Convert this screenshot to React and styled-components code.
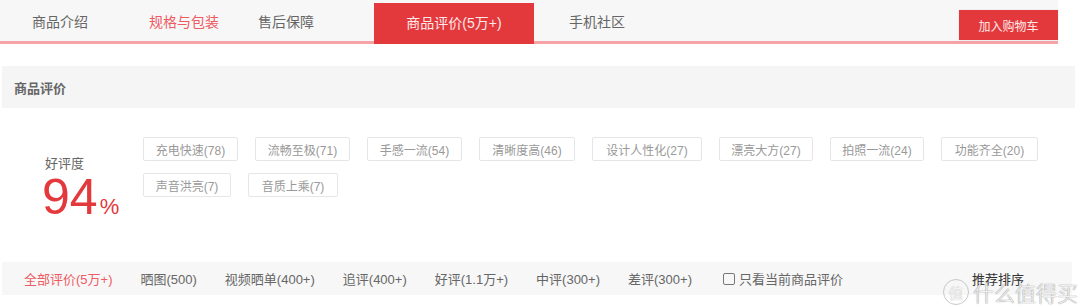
import React from "react";
import styled, { createGlobalStyle } from "styled-components";

const GlobalStyle = createGlobalStyle`
  html, body {
    margin: 0;
    padding: 0;
    background: #ffffff;
    font-family: "Liberation Sans", "Noto Sans CJK SC", sans-serif;
  }
`;

const tabs = [
  { label: "商品介绍", width: 120 },
  { label: "规格与包装", width: 128, tone: "pink" },
  { label: "售后保障", width: 76 },
  { label: "商品评价(5万+)", width: 160, active: true, gap: 50 },
  { label: "手机社区", width: 126 },
];

const tags = [
  ["充电快速(78)", 95],
  ["流畅至极(71)", 95],
  ["手感一流(54)", 95],
  ["清晰度高(46)", 96],
  ["设计人性化(27)", 110],
  ["漂亮大方(27)", 94],
  ["拍照一流(24)", 94],
  ["功能齐全(20)", 97],
  ["声音洪亮(7)", 88],
  ["音质上乘(7)", 90],
];

const filters = [
  { label: "全部评价(5万+)", active: true },
  { label: "晒图(500)" },
  { label: "视频晒单(400+)" },
  { label: "追评(400+)" },
  { label: "好评(1.1万+)" },
  { label: "中评(300+)" },
  { label: "差评(300+)" },
];

function App() {
  return (
    <Page>
      <GlobalStyle />
      <TabBar>
        <TabList>
          {tabs.map((t) => (
            <Tab
              key={t.label}
              $w={t.width}
              $gap={t.gap}
              $active={t.active}
              $tone={t.tone}
            >
              {t.label}
            </Tab>
          ))}
        </TabList>
        <CartButton>加入购物车</CartButton>
      </TabBar>

      <SectionHead>商品评价</SectionHead>

      <Summary>
        <Rate>
          <RateLabel>好评度</RateLabel>
          <RateValue>
            94<Percent>%</Percent>
          </RateValue>
        </Rate>
        <TagList>
          {tags.map(([label, w]) => (
            <Tag key={label} $w={w}>
              {label}
            </Tag>
          ))}
        </TagList>
      </Summary>

      <FilterBar>
        {filters.map((f) => (
          <Filter key={f.label} $active={f.active}>
            {f.label}
          </Filter>
        ))}
        <OnlyCurrent>
          <CheckBox />
          只看当前商品评价
        </OnlyCurrent>
        <Sort>推荐排序</Sort>
        <Watermark>
          <WatermarkBadge>值</WatermarkBadge>
          什么值得买
        </Watermark>
      </FilterBar>
    </Page>
  );
}

const Page = styled.div`
  width: 1080px;
  height: 307px;
  overflow: hidden;
  background: #ffffff;
  display: flex;
  flex-direction: column;
`;

const TabBar = styled.div`
  width: 1058px;
  height: 41px;
  background: #f7f7f7;
  border-bottom: 3px solid #f5a3a7;
  display: flex;
  align-items: flex-end;
  justify-content: space-between;
  box-sizing: content-box;
`;

const TabList = styled.div`
  display: flex;
  height: 100%;
  align-items: flex-end;
`;

const Tab = styled.div`
  width: ${(p) => p.$w}px;
  margin-left: ${(p) => p.$gap || 0}px;
  height: 41px;
  margin-bottom: ${(p) => (p.$active ? "-3px" : "0")};
  padding-bottom: ${(p) => (p.$active ? "3px" : "0")};
  display: flex;
  align-items: center;
  justify-content: center;
  font-size: 14px;
  color: ${(p) =>
    p.$active ? "#fde9ea" : p.$tone === "pink" ? "#ee5a62" : "#666666"};
  background: ${(p) => (p.$active ? "#e4393c" : "transparent")};
  box-sizing: border-box;
`;

const CartButton = styled.div`
  width: 99px;
  height: 30px;
  margin-bottom: 1px;
  background: #e4393c;
  color: #fde9ea;
  font-size: 12px;
  display: flex;
  align-items: center;
  justify-content: center;
  box-shadow: 0 0 1px rgba(0, 0, 0, 0.2);
`;

const SectionHead = styled.div`
  margin: 22px 5px 0 2px;
  height: 42px;
  background: #f5f5f5;
  display: flex;
  align-items: center;
  padding-left: 12px;
  font-size: 13px;
  font-weight: bold;
  color: #666666;
`;

const Summary = styled.div`
  display: flex;
  padding-top: 29px;
  height: 154px;
  box-sizing: border-box;
`;

const Rate = styled.div`
  width: 143px;
  padding-left: 45px;
  padding-top: 19px;
  box-sizing: border-box;
  display: flex;
  flex-direction: column;
`;

const RateLabel = styled.div`
  font-size: 13px;
  color: #666666;
  line-height: 16px;
`;

const RateValue = styled.div`
  font-size: 50px;
  line-height: 50px;
  color: #e4393c;
  font-family: "Liberation Sans", "DejaVu Sans", sans-serif;
  margin-left: -3px;
`;

const Percent = styled.span`
  font-size: 22px;
  margin-left: 2px;
`;

const TagList = styled.div`
  display: flex;
  flex-wrap: wrap;
  width: 920px;
  column-gap: 17px;
  row-gap: 12px;
  align-content: flex-start;
`;

const Tag = styled.div`
  width: ${(p) => p.$w}px;
  height: 24px;
  border: 1px solid #e6e6e6;
  border-radius: 2px;
  box-sizing: border-box;
  display: flex;
  align-items: center;
  justify-content: center;
  font-size: 12px;
  color: #999999;
`;

const FilterBar = styled.div`
  position: relative;
  margin: 0 8px 0 2px;
  height: 33px;
  background: #f7f7f7;
  display: flex;
  align-items: center;
  padding-left: 22px;
  font-size: 13px;
  color: #666666;
`;

const Filter = styled.div`
  margin-right: 28px;
  color: ${(p) => (p.$active ? "#ee5a62" : "#666666")};
  white-space: nowrap;
`;

const OnlyCurrent = styled.label`
  display: flex;
  align-items: center;
  margin-left: 3px;
  color: #666666;
  white-space: nowrap;
`;

const CheckBox = styled.span`
  width: 12px;
  height: 12px;
  border: 1px solid #777777;
  border-radius: 2px;
  margin-right: 4px;
  box-sizing: border-box;
`;

const Sort = styled.div`
  margin-left: auto;
  margin-right: 48px;
  color: #333333;
`;

const Watermark = styled.div`
  position: absolute;
  right: -6px;
  top: 15px;
  display: flex;
  align-items: center;
  font-size: 21px;
  color: rgba(255, 255, 255, 0.9);
  text-shadow: 0 0 1px #888888, 0 0 1px #999999;
  font-family: "Noto Sans CJK SC", sans-serif;
  font-weight: 300;
  gap: 4px;
`;

const WatermarkBadge = styled.span`
  width: 26px;
  height: 26px;
  border-radius: 50%;
  border: 1.5px solid #c8c8c8;
  font-size: 15px;
  display: flex;
  align-items: center;
  justify-content: center;
  color: #ffffff;
  text-shadow: 0 0 1px #888888;
  box-sizing: border-box;
`;

export default App;
